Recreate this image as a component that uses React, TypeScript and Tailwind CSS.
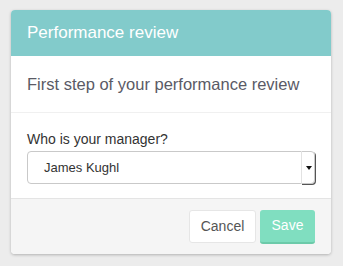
export default function App() {
	return (
		<div
			className="w-[343px] h-[266px] bg-[#ececec] pt-[10px] pl-[11px]"
			style={{ fontFamily: '"Helvetica Neue", "Liberation Sans", Arial, sans-serif' }}>
			<div className="w-[320px] rounded-[4px] bg-white shadow-[0_1px_3px_rgba(0,0,0,0.25)] overflow-hidden">
				<div className="h-[46px] bg-[#82cbcb] pl-[16px] flex items-center">
					<h1 className="text-[17px] text-white font-light">Performance review</h1>
				</div>
				<div className="h-[57px] pl-[16px] flex items-center border-b border-[#f0f0f0]">
					<p className="text-[16.5px] text-[#5a5a66] font-light">
						First step of your performance review
					</p>
				</div>
				<div className="px-[16px] pt-[17px] pb-[14px] border-b border-[#e4e4e4]">
					<label className="block text-[14px] text-[#333] leading-[18px] mb-[3px]">
						Who is your manager?
					</label>
					<div className="relative h-[33px] w-[288px] rounded-[4px] border border-[#c9c9c9] bg-white flex items-center pl-[16px]">
						<span className="text-[13px] text-[#333]">James Kughl</span>
						<div className="absolute right-[-1px] top-[-1px] bottom-[-1px] w-[14px] flex items-center justify-center border-l border-[#e2e2e2] rounded-r-[4px] shadow-[1px_1px_0_#555]">
							<div className="w-0 h-0 border-l-[3px] border-r-[3px] border-t-[4px] border-l-transparent border-r-transparent border-t-[#111]" />
						</div>
					</div>
				</div>
				<div className="h-[55px] bg-[#f5f5f5] flex items-center justify-end gap-[4px] pr-[16px]">
					<button className="h-[33px] w-[67px] rounded-[3px] bg-white border border-[#e6e6e6] text-[14px] text-[#555]">
						Cancel
					</button>
					<button className="h-[34px] w-[55px] rounded-[3px] bg-[#80deC0] border-b-2 border-[#6ccaa9] text-[14px] text-white">
						Save
					</button>
				</div>
			</div>
		</div>
	);
}
